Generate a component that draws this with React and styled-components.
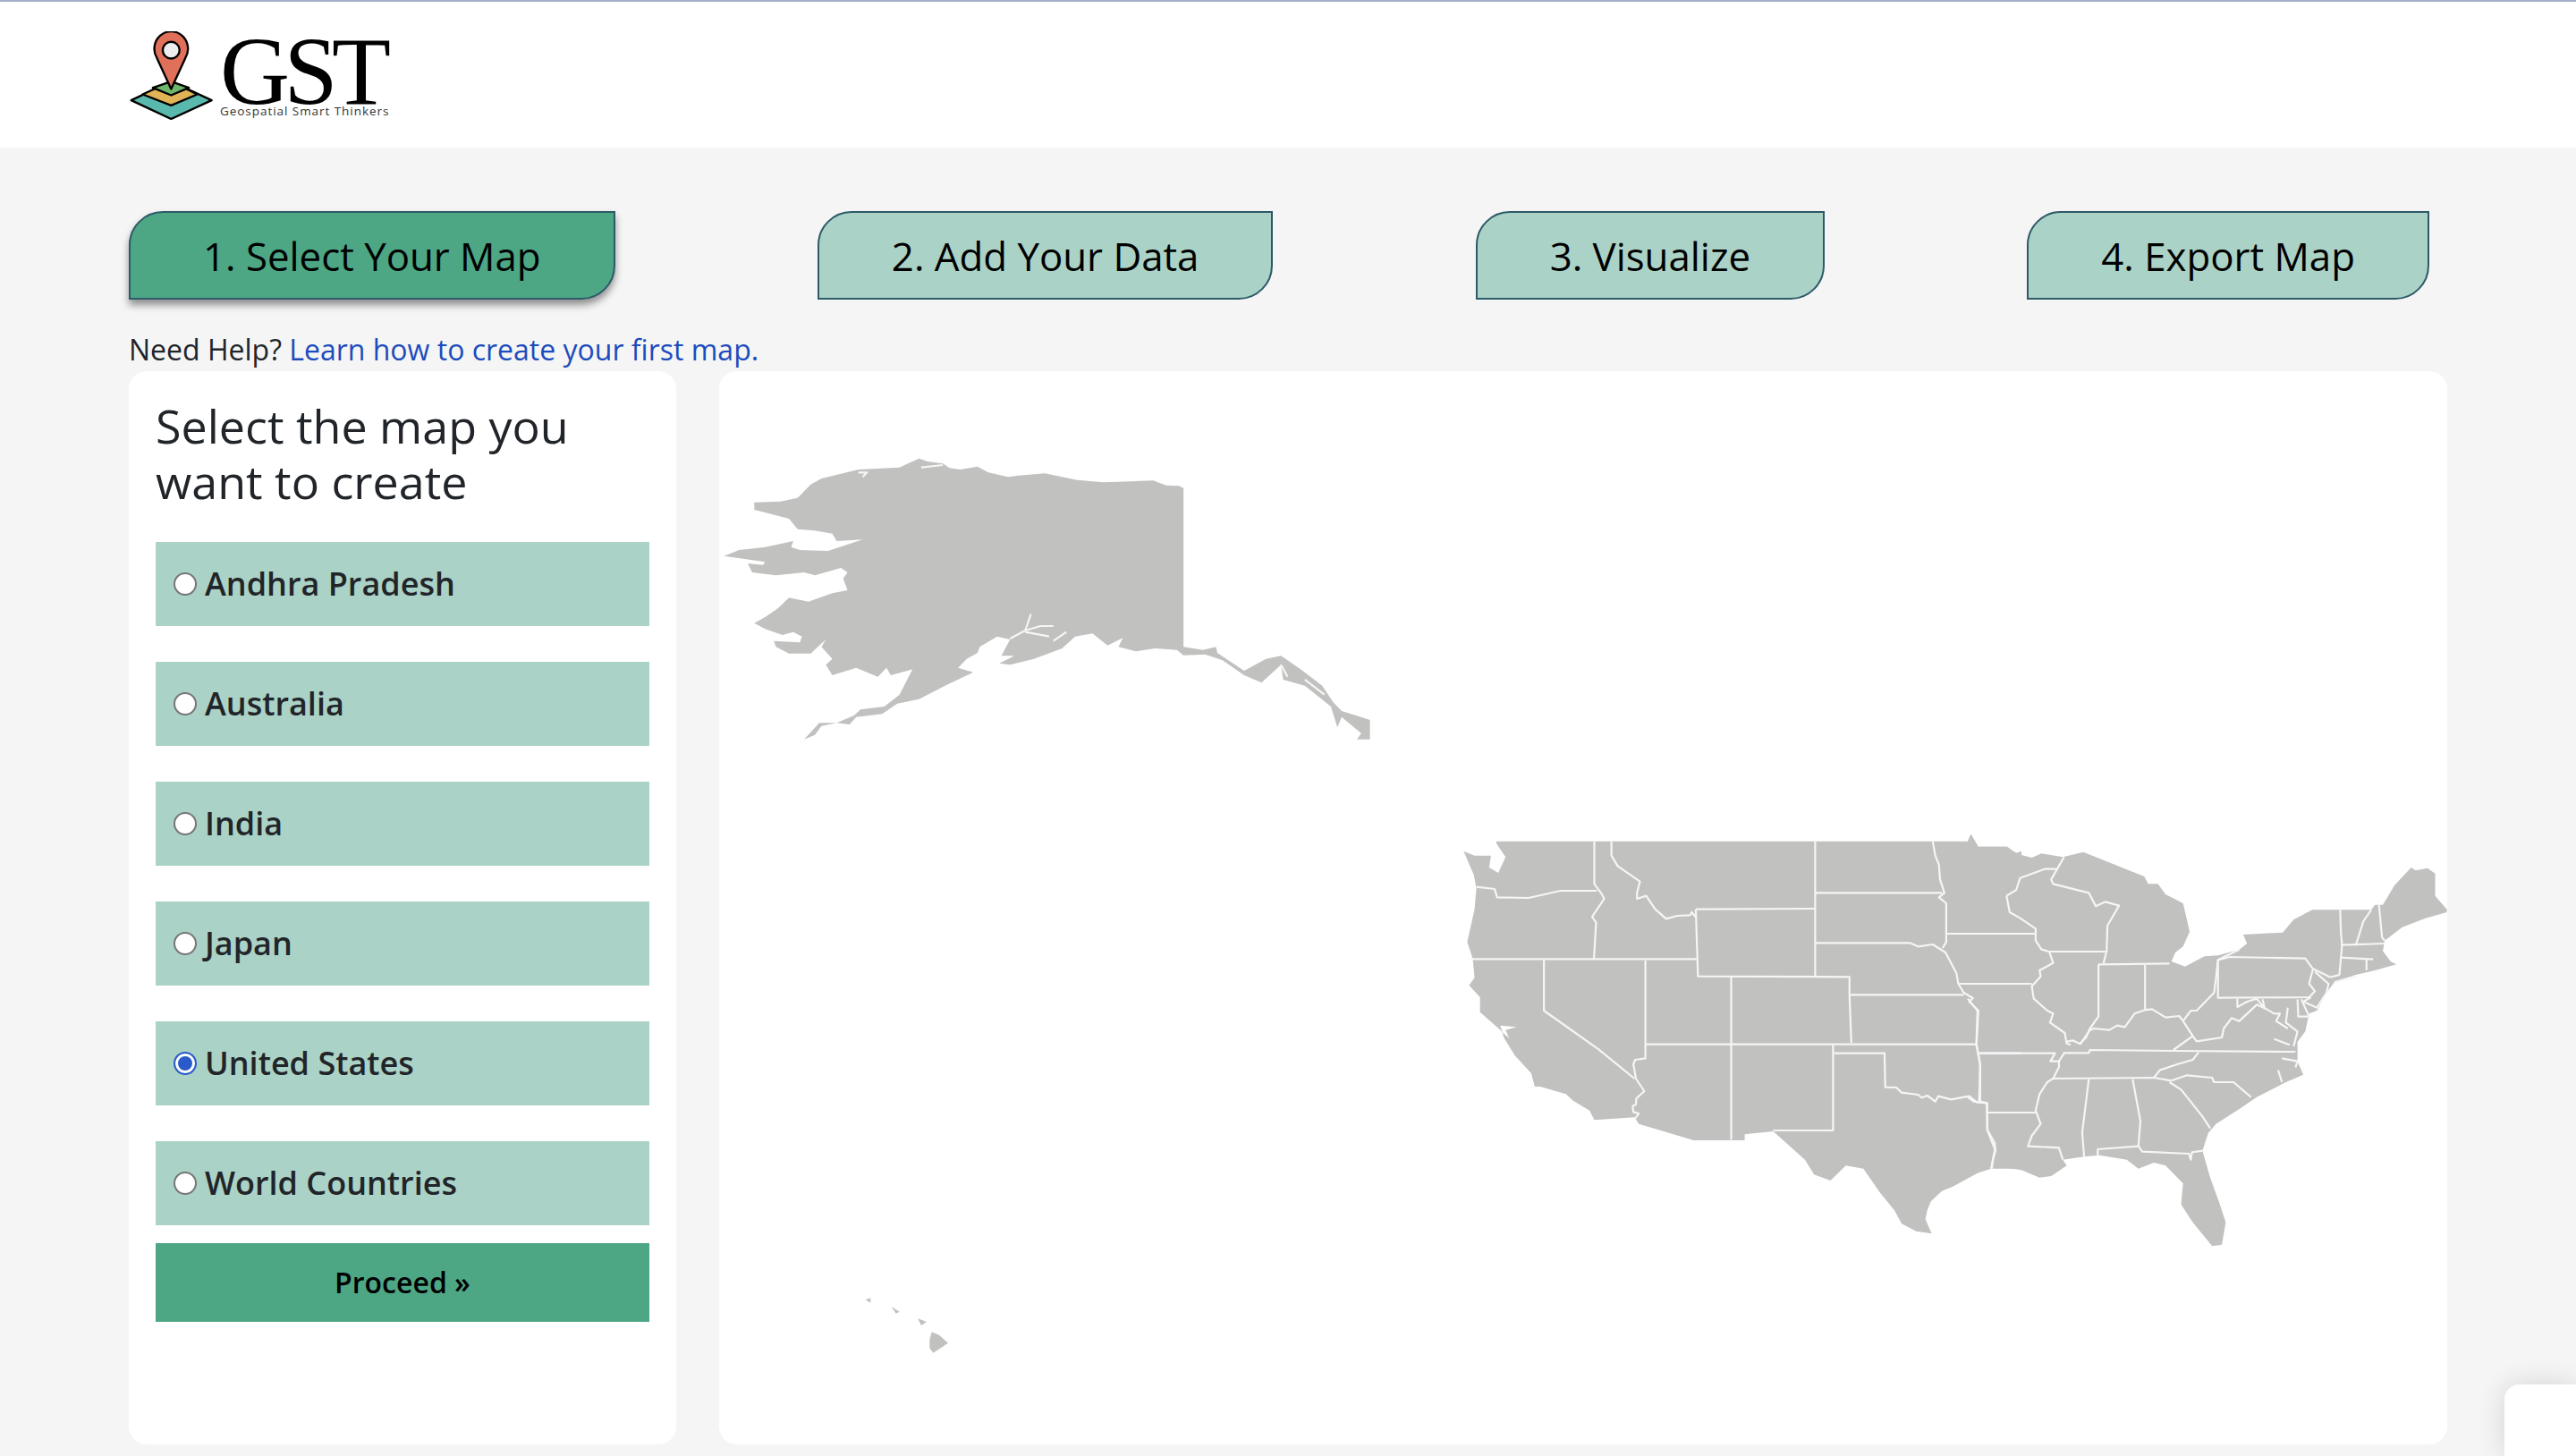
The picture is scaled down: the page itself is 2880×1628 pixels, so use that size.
import React from "react";
import styled, { createGlobalStyle } from "styled-components";

const Global = createGlobalStyle`
  html, body { margin: 0; padding: 0; background: #f5f5f5; }
  body { font-family: "Open Sans", "Noto Sans", sans-serif; color: #212529; height: 1628px; overflow: hidden; }
  * { box-sizing: border-box; }
`;

const Page = styled.div`
  position: relative;
  width: 2880px;
  height: 1628px;
  overflow: hidden;
  border-top: 2px solid #a5b1cc;
`;
const Header = styled.header`
  height: 163px;
  background: #fff;
  padding: 33px 0 0 145px;
`;
const Brand = styled.div`
  display: flex;
  align-items: flex-start;
  gap: 8px;
`;
const BrandText = styled.div`
  display: flex;
  flex-direction: column;
  width: 192px;
`;
const BrandName = styled.span`
  font-family: "Liberation Serif", serif;
  font-size: 108px;
  line-height: 82px;
  letter-spacing: -6.5px;
  color: #000;
  margin-top: 4px;
`;
const BrandTag = styled.span`
  font-family: "Open Sans", sans-serif;
  font-size: 13.5px;
  line-height: 15px;
  letter-spacing: 0.95px;
  white-space: nowrap;
  color: #333;
  margin-top: -4px;
`;
const Main = styled.main`
  padding: 71px 144px 0 144px;
`;
const Steps = styled.nav`
  display: flex;
  justify-content: space-between;
  margin-right: 20px;
`;
const Step = styled.div`
  height: 99px;
  padding: 0 81px;
  display: flex;
  align-items: center;
  font-size: 43.8px;
  color: #000;
  background: ${(p) => (p.$active ? "#4da785" : "#abd2c6")};
  border: 2px solid #2d5a68;
  border-radius: 38px 0 38px 0;
  box-shadow: ${(p) => (p.$active ? "0 6px 8px rgba(0,0,0,.42)" : "none")};
`;
const Help = styled.p`
  margin: 32px 0 0;
  height: 48px;
  font-size: 32px;
  line-height: 48px;
`;
const HelpLink = styled.a`
  color: #1c4cbc;
  text-decoration: none;
`;
const Panels = styled.div`
  display: grid;
  grid-template-columns: 612px 1fr;
  gap: 48px;
  height: 1200px;
`;
const Card = styled.section`
  background: #fff;
  border-radius: 20px;
  overflow: hidden;
`;
const Picker = styled(Card)`
  padding: 30px 30px 0;
`;
const Title = styled.h2`
  margin: 0 0 37px;
  font-size: 52px;
  line-height: 62px;
  font-weight: 400;
`;
const Options = styled.div`
  display: flex;
  flex-direction: column;
  gap: 40px;
`;
const Option = styled.label`
  height: 94px;
  display: flex;
  align-items: center;
  gap: 9px;
  padding: 0 0 2px 20px;
  background: #abd2c6;
  font-size: 36px;
  font-weight: 600;
`;
const Radio = styled.input`
  appearance: none;
  margin: 2px 0 0;
  width: 26px;
  height: 26px;
  border-radius: 50%;
  background: #fff;
  border: 2px solid ${(p) => (p.checked ? "#2a5bcb" : "#767676")};
  box-shadow: ${(p) => (p.checked ? "inset 0 0 0 3px #fff, inset 0 0 0 13px #2a5bcb" : "none")};
`;
const Proceed = styled.button`
  display: block;
  width: 100%;
  height: 88px;
  margin-top: 20px;
  padding: 0 0 2px;
  border: 0;
  background: #4da785;
  color: #000;
  font-family: inherit;
  font-size: 32px;
  font-weight: 600;
`;
const MapSvg = styled.svg`
  display: block;
  width: 100%;
  height: 100%;
  filter: blur(0.6px);
`;
const Land = styled.polygon`
  fill: #c1c1c0;
`;
const Cut = styled.polyline`
  fill: none;
  stroke: #f6f6f6;
  stroke-width: ${(p) => p.$w || 2.2}px;
  stroke-linejoin: round;
  vector-effect: non-scaling-stroke;
`;
const Notch = styled.polygon`
  fill: #fff;
`;
const Widget = styled.aside`
  position: absolute;
  right: 0;
  bottom: 0;
  width: 80px;
  height: 80px;
  background: #fff;
  border-top-left-radius: 16px;
  box-shadow: 0 0 30px rgba(0, 0, 0, 0.14);
`;

const alaska = "110,215 170,212 210,200 240,155 265,135 350,105 445,98 490,68 510,78 545,85 560,100 585,105 625,95 650,115 695,130 720,125 780,118 855,140 915,148 1030,142 1060,158 1090,160 1100,168 1100,700 1145,710 1175,700 1178,720 1240,780 1290,740 1325,730 1370,775 1420,830 1445,885 1465,915 1530,945 1530,1010 1500,1010 1510,990 1465,935 1455,970 1440,900 1380,830 1330,810 1325,760 1310,780 1280,820 1240,795 1190,745 1150,725 1100,728 1085,710 1035,705 990,715 950,700 960,670 925,695 890,655 850,665 820,705 755,740 700,760 675,755 710,730 680,730 700,675 670,665 630,700 625,720 600,740 580,770 615,785 550,830 490,875 440,890 405,925 345,935 330,960 300,955 265,965 250,995 225,1010 260,955 300,955 340,930 355,910 410,900 445,860 475,775 425,795 415,770 395,800 345,770 290,795 275,760 290,740 265,700 275,675 240,722 190,722 160,700 155,680 215,685 220,665 200,650 175,660 135,640 110,620 135,600 165,570 190,535 235,548 290,520 325,510 315,470 325,450 310,435 250,460 225,450 160,460 105,450 95,420 130,425 135,415 40,395 75,375 135,365 200,345 195,365 215,375 280,378 360,340 300,345 290,320 250,310 210,305 190,270 125,245 110,240";
const alaskaCuts = [
  "700,672 735,645 748,590",
  "735,645 770,630 800,630",
  "735,650 790,665",
  "800,680 830,650",
  "1325,760 1340,800",
  "1380,810 1425,860",
  "350,115 370,115 360,130",
  "495,98 545,90",
];

const west = "130,62 1003,62 1325,62 1422,62 1430,38 1450,80 1530,80 1550,103 1568,95 1568,1165 1525,1157 1490,1158 1455,1170 1425,1190 1380,1220 1350,1235 1320,1270 1310,1300 1305,1330 1322,1378 1280,1370 1240,1345 1220,1300 1180,1240 1135,1160 1087,1150 1045,1200 1000,1180 975,1130 888,1035 810,1045 810,1065 670,1065 520,1010 508,988 398,997 385,965 340,932 320,910 250,885 235,885 225,840 180,780 150,720 145,700 85,635 85,585 55,545 70,520 65,455 50,400 70,290 75,220 68,175 40,95 70,110 115,110 110,150 135,168 155,115 130,70";
const westCuts = [
  "398,62 398,205 418,238 425,255 392,315 403,335 397,455",
  "75,215 125,222 132,250 218,252 305,228 405,228",
  "445,62 445,110 462,145 523,197 515,235 515,255 540,245 565,290 595,322 625,312 660,310 665,300 675,315",
  "676,290 1003,288",
  "1003,62 1003,515",
  "676,290 682,515 1097,517 1097,577 1102,738",
  "60,457 678,457",
  "260,460 260,630 410,760 508,858",
  "538,462 538,790 510,795 505,810 512,858 535,900 513,925 512,945 503,950 505,970 520,975 510,992",
  "773,517 773,1063",
  "538,743 1102,743 1445,743",
  "1052,745 1052,1032 888,1032",
  "1055,773 1193,773 1195,887 1225,888 1240,905 1285,912 1295,922 1310,915 1332,935 1340,917 1375,928 1425,917 1445,937 1473,940 1475,1030 1495,1075 1497,1100 1490,1130 1487,1160",
  "1003,235 1350,235",
  "1325,62 1332,110 1342,140 1345,190 1357,235 1342,250 1362,270 1362,400 1352,420",
  "1003,403 1262,403 1285,415 1325,408 1360,435 1390,505 1395,540 1410,570 1435,588 1425,600 1450,630 1445,743 1455,810 1452,937",
  "1097,577 1410,577",
  "1362,372 1568,372",
  "1395,540 1568,540",
  "1450,773 1568,773",
  "1475,972 1568,972",
];

const east = "0,60 8,38 25,80 100,80 130,105 165,117 190,103 245,115 298,98 350,125 455,180 465,205 490,205 510,240 555,270 572,365 555,415 535,435 525,465 560,482 610,448 645,445 700,425 720,405 710,375 812,368 840,325 888,292 960,292 1040,292 1050,275 1070,275 1100,210 1143,150 1155,160 1185,152 1205,170 1205,245 1235,290 1235,300 1180,320 1120,350 1075,395 1070,430 1090,465 1105,475 1050,495 1000,510 945,535 925,570 900,630 880,640 870,700 850,735 850,800 865,845 820,870 790,890 745,920 700,960 640,1010 620,1040 605,1100 625,1190 650,1280 665,1340 655,1415 630,1420 580,1340 550,1280 555,1210 510,1150 480,1140 440,1160 410,1130 340,1115 300,1120 245,1130 255,1150 215,1185 185,1190 130,1160 60,1160 0,1185";
const eastCuts = [
  "100,245 125,225 135,185 198,155 228,155",
  "248,115 215,190 220,205 312,235 330,280 355,265 390,278 360,345 358,430 350,472",
  "100,245 108,300 135,320 175,355 175,395 190,425 210,432",
  "0,372 175,372",
  "210,432 358,432",
  "210,432 220,470 185,495 188,515 165,548 170,590 205,630 220,640 212,670 250,705 255,740 265,745",
  "0,540 165,540",
  "0,590 25,630 22,745 32,810 32,935 50,940 50,1030 70,1095 60,1160",
  "0,920 15,935 50,940",
  "50,972 175,972",
  "25,773 225,773 213,800 238,800",
  "250,770 235,800 235,820 220,858 205,870 185,910 175,965 188,1010 165,1050 155,1085 235,1090 245,1130",
  "250,772 312,772 315,762 530,765 845,768",
  "218,858 480,855 525,865",
  "312,860 295,1040 300,1120",
  "425,860 445,1000 440,1085",
  "335,1120 335,1095 440,1085 450,1103 570,1110 575,1130 578,1105 605,1100",
  "595,770 580,795 540,810 495,830 480,855",
  "525,865 565,847 630,855 635,870 685,870 730,920",
  "520,870 550,895 605,985 625,1025",
  "337,475 520,472",
  "337,475 337,650 315,690 305,720 290,740",
  "457,475 457,630",
  "457,628 430,640 405,685 385,680 365,695 325,690 315,695",
  "252,735 270,730 290,742 315,695",
  "457,628 475,625 510,653 545,648 555,665",
  "555,665 575,630 590,630 635,570 640,520 645,460 700,425",
  "645,460 675,450 870,455 890,490 880,540 895,565 880,585 645,587 645,460",
  "890,490 935,518",
  "895,500 930,540 925,570 900,620 865,600 885,585",
  "695,590 695,618 720,600 745,590 765,622 760,592",
  "555,665 580,715 590,733 655,720 660,690 680,655 700,665 745,610 770,625 790,640 805,640 795,665 825,690",
  "530,762 580,715",
  "850,592 852,650 880,650 860,592",
  "825,620 820,670 850,700 840,750",
  "790,725 830,745",
  "810,790 850,800 845,820",
  "800,830 810,870",
  "960,292 962,370 965,410 958,510 935,518",
  "1040,292 1020,330 1000,412",
  "1060,275 1068,385 1075,395",
  "962,410 1075,405",
  "960,452 1045,458",
  "1028,458 1028,495",
  "945,535 1000,515",
];

const maps = [
  { t: "translate(1620 920) scale(0.40816 0.33333)", land: west, cuts: westCuts },
  { t: "translate(2200 920) scale(0.43367 0.33333)", land: east, cuts: eastCuts },
  { t: "translate(790 490) scale(0.48469 0.33333)", land: alaska, cuts: alaskaCuts },
];

const USMap = () => (
  <MapSvg viewBox="804 415 1932 1200" aria-label="United States map">
    {maps.map((m) => (
      <g key={m.t} transform={m.t}>
        <Land points={m.land} />
      </g>
    ))}
    {maps.map((m) => (
      <g key={m.t + "c"} transform={m.t}>
        {m.cuts.map((c) => (
          <Cut key={c} points={c} />
        ))}
      </g>
    ))}
    <g transform="translate(1620 920) scale(0.40816 0.33333)">
      <Notch points="140,680 185,685 155,695 165,722 148,705" />
    </g>
    <g transform="translate(900 1420) scale(0.33333)">
      <Land points="425,208 450,218 480,245 455,262 430,278 418,262 418,235" />
      <Land points="378,163 408,174 390,186" />
      <Land points="290,123 317,140 305,146" />
      <Land points="203,100 220,94 220,110" />
    </g>
  </MapSvg>
);

const LogoMark = () => (
  <svg width="93" height="99" viewBox="135 105 277 295" style={{ flex: "none" }}>
    <g stroke="#000" strokeWidth="7" strokeLinejoin="round">
      <polygon points="140,335 273,272 408,335 273,397" fill="#5ab9ad" />
      <polygon points="178,315 273,272 360,315 273,352" fill="#e0b456" />
      <polygon points="212,293 273,272 332,293 273,318" fill="#6cb56a" />
      <path d="M273 297 L226 195 A56 58 0 1 1 320 195 Z" fill="#e0705a" />
      <circle cx="273" cy="168" r="28" fill="#eee" />
    </g>
  </svg>
);

const options = ["Andhra Pradesh", "Australia", "India", "Japan", "United States", "World Countries"];
const steps = ["1. Select Your Map", "2. Add Your Data", "3. Visualize", "4. Export Map"];

export default function App() {
  return (
    <Page>
      <Global />
      <Header>
        <Brand>
          <LogoMark />
          <BrandText>
            <BrandName>GST</BrandName>
            <BrandTag>Geospatial Smart Thinkers</BrandTag>
          </BrandText>
        </Brand>
      </Header>
      <Main>
        <Steps>
          {steps.map((s, i) => (
            <Step key={s} $active={i === 0}>{s}</Step>
          ))}
        </Steps>
        <Help>
          Need Help? <HelpLink href="#">Learn how to create your first map.</HelpLink>
        </Help>
        <Panels>
          <Picker>
            <Title>Select the map you want to create</Title>
            <Options>
              {options.map((o) => (
                <Option key={o}>
                  <Radio type="radio" name="map" readOnly checked={o === "United States"} />
                  {o}
                </Option>
              ))}
            </Options>
            <Proceed>Proceed »</Proceed>
          </Picker>
          <Card>
            <USMap />
          </Card>
        </Panels>
      </Main>
      <Widget />
    </Page>
  );
}
